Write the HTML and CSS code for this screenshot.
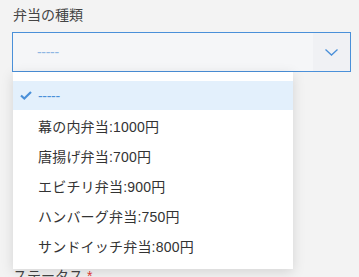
FILE: index.html
```html
<!DOCTYPE html>
<html lang="ja">

<head>
    <meta charset="UTF-8">
    <meta name="viewport" content="width=device-width, initial-scale=1.0">
    <title>弁当の注文</title>
    <link rel="stylesheet" href="styles.css">
</head>

<body>
    <div class="form">
        <div class="field">
            <div class="label">弁当の種類</div>
            <div class="select-wrap">
                <div class="select">
                    <span class="value">-----</span>
                    <span class="arrow">
                        <svg width="13" height="7" viewBox="0 0 13 7">
                            <polyline points="0.5,0.5 6.5,6 12.5,0.5" fill="none" stroke="#4a90d9" stroke-width="1.3" />
                        </svg>
                    </span>
                </div>
                <ul class="menu">
                    <li class="option selected">
                        <span class="check">
                            <svg width="12" height="9" viewBox="0 0 12 9">
                                <polyline points="1,4.5 4.3,7.5 11,1" fill="none" stroke="#4a90d9" stroke-width="2.2" />
                            </svg>
                        </span>
                        <span class="empty">-----</span>
                    </li>
                    <li class="option"><span class="check"></span>幕の内弁当:1000円</li>
                    <li class="option"><span class="check"></span>唐揚げ弁当:700円</li>
                    <li class="option"><span class="check"></span>エビチリ弁当:900円</li>
                    <li class="option"><span class="check"></span>ハンバーグ弁当:750円</li>
                    <li class="option"><span class="check"></span>サンドイッチ弁当:800円</li>
                </ul>
            </div>
        </div>

        <div class="field status">
            <div class="label">ステータス <span class="required">*</span></div>
        </div>
    </div>
</body>

</html>
```

FILE: styles.css
```css
/* General styles */
body {
    margin: 0;
    padding: 0;
    background: #f3f3f3;
    font-family: "Liberation Sans", "Noto Sans CJK JP", sans-serif;
    font-size: 14px;
    color: #333333;
}

.form {
    padding: 5px 9px 0 12px;
}

.label {
    font-size: 14px;
    line-height: 20px;
    color: #444444;
    margin-bottom: 7px;
    padding-left: 1px;
}

.required {
    color: #e53935;
}

.select-wrap {
    position: relative;
}

.select {
    box-sizing: border-box;
    width: 339px;
    height: 40px;
    border: 1px solid #4a90d9;
    background: #f5f6f8;
    display: flex;
    align-items: center;
}

.value {
    flex: 1;
    padding-left: 24px;
    color: #8fb6e3;
    letter-spacing: -0.3px;
}

.arrow {
    width: 37px;
    height: 100%;
    background: #f0f1f4;
    display: flex;
    align-items: center;
    justify-content: center;
}

/* Dropdown list */
.menu {
    position: absolute;
    top: 100%;
    left: 1px;
    width: 280px;
    margin: 0;
    padding: 9px 0 8px;
    list-style: none;
    background: #ffffff;
    box-shadow: 0 3px 12px rgba(0, 0, 0, 0.13);
    z-index: 10;
}

.option {
    display: flex;
    align-items: center;
    height: 30px;
    padding-left: 7px;
    color: #333333;
    white-space: nowrap;
    letter-spacing: 0.2px;
}

.option.selected {
    background: #e3f0fc;
    height: 29px;
    margin-bottom: 1px;
}

.check {
    width: 18px;
    display: flex;
    align-items: center;
}

.empty {
    color: #4a90d9;
    letter-spacing: -0.3px;
}

.status {
    margin-top: 194px;
}
```
